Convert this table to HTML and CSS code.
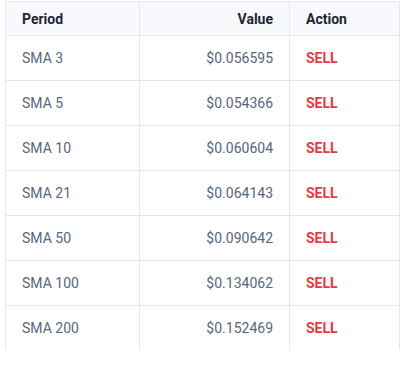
FILE: index.html
```html
<!DOCTYPE html>
<html>
<head>
<meta charset="utf-8">
<link rel="stylesheet" href="styles.css">
</head>
<body>
<div class="wrap">
  <div class="scroller">
    <table class="sma">
      <thead>
        <tr><th class="c1">Period</th><th class="c2">Value</th><th class="c3">Action</th></tr>
      </thead>
      <tbody>
        <tr><td class="c1">SMA 3</td><td class="c2">$0.056595</td><td class="c3 sell">SELL</td></tr>
        <tr><td class="c1">SMA 5</td><td class="c2">$0.054366</td><td class="c3 sell">SELL</td></tr>
        <tr><td class="c1">SMA 10</td><td class="c2">$0.060604</td><td class="c3 sell">SELL</td></tr>
        <tr><td class="c1">SMA 21</td><td class="c2">$0.064143</td><td class="c3 sell">SELL</td></tr>
        <tr><td class="c1">SMA 50</td><td class="c2">$0.090642</td><td class="c3 sell">SELL</td></tr>
        <tr><td class="c1">SMA 100</td><td class="c2">$0.134062</td><td class="c3 sell">SELL</td></tr>
        <tr><td class="c1">SMA 200</td><td class="c2">$0.152469</td><td class="c3 sell">SELL</td></tr>
      </tbody>
    </table>
  </div>
</div>
</body>
</html>
```

FILE: styles.css
```css
html, body {
  margin: 0;
  padding: 0;
  background: #ffffff;
}
body {
  font-family: Roboto, "Liberation Sans", sans-serif;
  color: #58667e;
}
.wrap {
  padding: 1px 0 0 5px;
}
.scroller {
  height: 349px;
  overflow: hidden;
}
.sma {
  border-collapse: collapse;
  font-size: 14px;
  table-layout: fixed;
}
.sma th, .sma td {
  border: 1px solid #e5e7ec;
  padding: 0 16px;
  text-align: left;
}
.sma th {
  height: 33px;
  background: #f8f9fc;
  color: #222531;
  font-weight: 700;
}
.sma td {
  height: 44px;
}
.sma .c1 { width: 101px; }
.sma .c2 { width: 117px; text-align: right; }
.sma .c3 { width: 77px; }
.sma td.sell {
  color: #ea3943;
  font-weight: 700;
}
```
